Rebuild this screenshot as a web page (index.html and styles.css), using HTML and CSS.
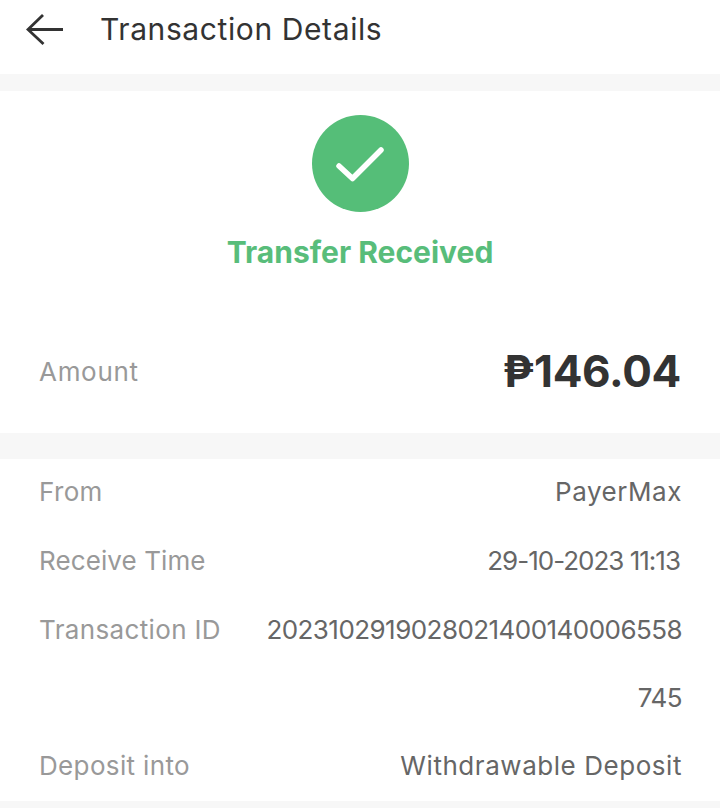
FILE: index.html
```html
<!DOCTYPE html>
<html lang="en">
<head>
  <meta charset="UTF-8">
  <title>Transaction Details</title>
  <link rel="stylesheet" href="styles.css">
</head>
<body>

<!-- Top bar -->
<header class="topbar">
  <svg class="back" width="38" height="32" viewBox="0 0 38 32" fill="none" stroke="#333" stroke-width="2.800">
    <path d="M37 15.500H2M17 1L2 15.500L17.500 30"/>
  </svg>
  <h1>Transaction Details</h1>
</header>

<!-- Status and amount -->
<section class="summary">
  <div class="tick">
    <svg width="48" height="36" viewBox="0 0 48 36" fill="none" stroke="#fff" stroke-width="5.500" stroke-linecap="round" stroke-linejoin="round">
      <path d="M3 20L16.500 32.500L45 4"/>
    </svg>
  </div>
  <p class="status">Transfer Received</p>
  <div class="amount-row">
    <span class="label label-amount">Amount</span>
    <span class="amount">₱146.04</span>
  </div>
</section>

<!-- Detail rows -->
<section class="details">
  <div class="row row-from"><span class="label">From</span><span class="value">PayerMax</span></div>
  <div class="row row-time"><span class="label label-time">Receive Time</span><span class="value date">29-10-2023 11:13</span></div>
  <div class="row"><span class="label">Transaction ID</span><span class="value txn">2023102919028021400140006558<br>745</span></div>
  <div class="row"><span class="label">Deposit into</span><span class="value">Withdrawable Deposit</span></div>
</section>

</body>
</html>
```

FILE: styles.css
```css
/* Page */
body {
  margin: 0;
  height: 808px;
  overflow: hidden;
  background: #f7f7f7;
  font-family: "Inter", "Lato", sans-serif;
  color: #333;
}

/* Top bar */
.topbar {
  height: 74px;
  background: #fff;
  display: flex;
  align-items: center;
  padding-left: 26px;
  gap: 36px;
  box-sizing: border-box;
  padding-bottom: 16px;
}

.back {
  flex: none;
  margin-top: 2px;
}

.topbar h1 {
  margin: 0;
  font-size: 30px;
  font-weight: 400;
  letter-spacing: 0.6px;
  color: #333;
}

/* Status and amount */
.summary {
  margin-top: 17px;
  height: 342px;
  background: #fff;
  display: flex;
  flex-direction: column;
  align-items: center;
  padding-top: 24px;
  box-sizing: border-box;
}

.tick {
  width: 97px;
  height: 97px;
  border-radius: 50%;
  background: #55be78;
  display: flex;
  align-items: center;
  justify-content: center;
}

.status {
  margin: 20px 0 0;
  font-size: 30px;
  line-height: 40px;
  font-weight: 700;
  color: #58bd7a;
}

.amount-row {
  align-self: stretch;
  display: flex;
  justify-content: space-between;
  align-items: center;
  margin-top: 72px;
  padding: 0 39px;
}

.label {
  font-size: 26px;
  letter-spacing: 0.35px;
  color: #999;
}

.label-amount {
  letter-spacing: 0.7px;
}

.label-time {
  letter-spacing: 0.1px;
}

.amount {
  font-size: 44px;
  font-weight: 700;
  letter-spacing: -0.3px;
  color: #333;
}

/* Detail rows */
.details {
  margin-top: 26px;
  height: 342px;
  background: #fff;
  padding: 0 38px 0 39px;
  box-sizing: border-box;
}

.row {
  display: flex;
  justify-content: space-between;
  font-size: 26px;
  line-height: 68px;
}

.row .label {
  flex: none;
}

.row-from {
  line-height: 66px;
  padding-bottom: 2px;
}

.row-time {
  padding-bottom: 1px;
}

.value {
  color: #666;
  text-align: right;
  letter-spacing: 0.55px;
}

.date {
  letter-spacing: -1px;
  padding-right: 2px;
}

.txn {
  letter-spacing: -0.55px;
}
```
